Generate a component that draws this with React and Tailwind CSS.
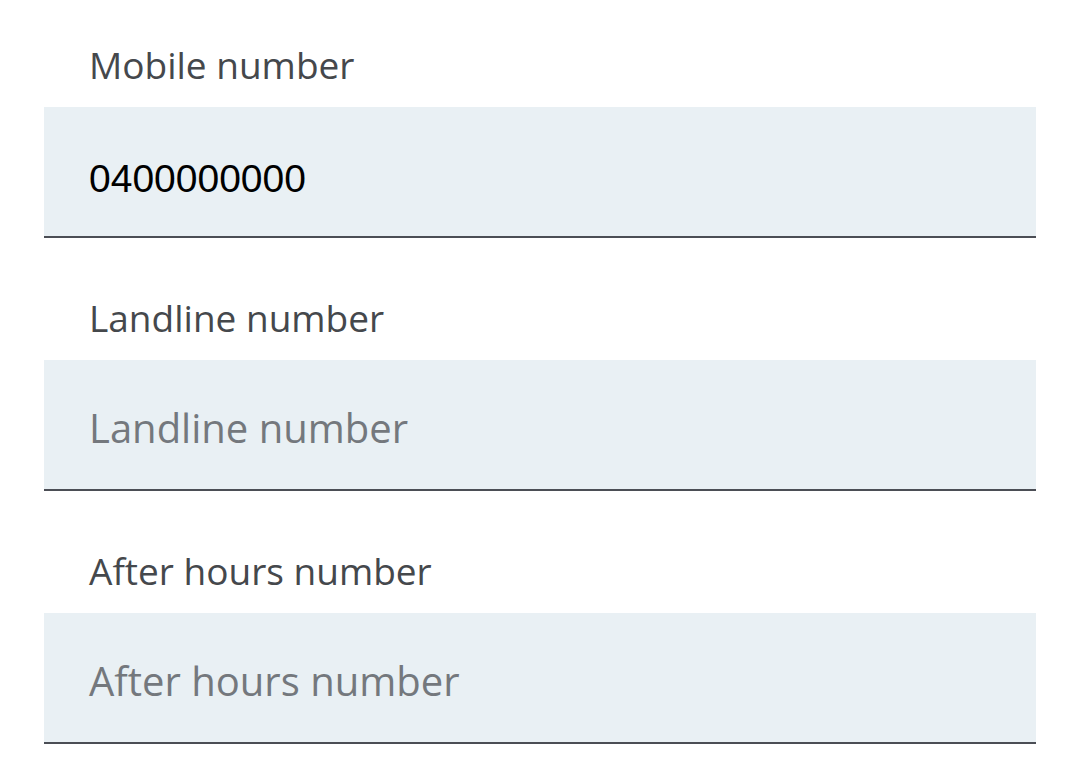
export default function App() {
  const fields = [
    { label: "Mobile number", value: "0400000000" },
    { label: "Landline number", placeholder: "Landline number" },
    { label: "After hours number", placeholder: "After hours number" },
  ];
  return (
    <div className="w-[1080px] h-[781px] bg-white overflow-hidden" style={{ fontFamily: '"Open Sans", "Noto Sans", sans-serif' }}>
      <div className="flex flex-col px-[44px] -mt-[15px]">
        {fields.map((f) => (
          <div key={f.label} className="flex flex-col">
            <div className="h-[122px] flex items-end pl-[45px] pb-[24px] text-[37px] leading-none text-[#45484c]">{f.label}</div>
            {f.value ? (
              <div className="h-[131px] bg-[#e9f0f4] border-b-2 border-[#4b4e55] pl-[45px] pt-[52px] text-[39px] leading-none text-black" style={{ fontFamily: '"Liberation Sans", Arial, sans-serif' }}>
                {f.value}
              </div>
            ) : (
              <div className="h-[131px] bg-[#e9f0f4] border-b-2 border-[#4b4e55] pl-[45px] pt-[48px] text-[40px] leading-none text-[#74787d]">
                {f.placeholder}
              </div>
            )}
          </div>
        ))}
      </div>
    </div>
  );
}
